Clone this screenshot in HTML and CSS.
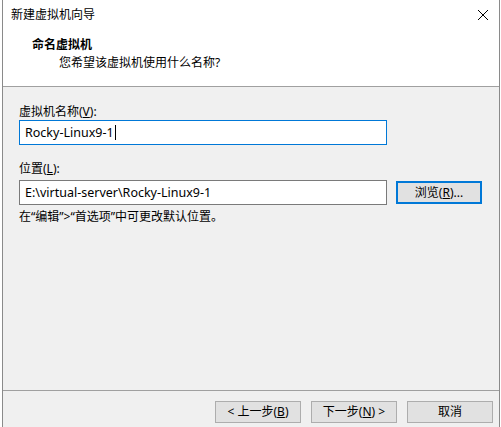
FILE: index.html
```html
<!DOCTYPE html>
<html lang="zh-CN">
<head>
<meta charset="utf-8">
<link rel="stylesheet" href="styles.css">
</head>
<body>
<div class="dialog">
  <div class="header">
    <div class="titlebar">
      <span class="title">新建虚拟机向导</span>
      <svg class="close" width="12" height="12" viewBox="0 0 12 12"><path d="M1 1L11 11M11 1L1 11" stroke="#000" stroke-width="1"/></svg>
    </div>
    <div class="heading">命名虚拟机</div>
    <div class="subheading">您希望该虚拟机使用什么名称?</div>
  </div>
  <div class="body">
    <div class="label">虚拟机名称(<u>V</u>):</div>
    <div class="row">
      <div class="input focused">Rocky-Linux9-1<span class="caret"></span></div>
    </div>
    <div class="label second">位置(<u>L</u>):</div>
    <div class="row">
      <div class="input">E:\virtual-server\Rocky-Linux9-1</div>
      <button class="btn browse">浏览(<u>R</u>)...</button>
    </div>
    <div class="hint">在“编辑”&gt;“首选项”中可更改默认位置。</div>
  </div>
  <div class="footer">
    <button class="btn">&lt; 上一步(<u>B</u>)</button>
    <button class="btn">下一步(<u>N</u>) &gt;</button>
    <button class="btn">取消</button>
  </div>
</div>
</body>
</html>
```

FILE: styles.css
```css
* { box-sizing: border-box; }
html, body {
  margin: 0;
  padding: 0;
  background: #ffffff;
  font-family: "Noto Sans", "Noto Sans CJK SC", sans-serif;
  font-size: 12px;
  color: #000;
}
.dialog {
  margin-left: 2px;
  width: 498px;
  height: 427px;
  border-left: 1px solid #8a8a8a;
  border-right: 1px solid #8a8a8a;
  display: flex;
  flex-direction: column;
  background: #f0f0f0;
}
.header {
  background: #ffffff;
  height: 87px;
  border-bottom: 1px solid #a0a0a0;
  padding-top: 7px;
}
.titlebar {
  display: flex;
  justify-content: space-between;
  align-items: center;
  height: 16px;
  padding-left: 8px;
  padding-right: 10px;
  line-height: 16px;
}
.heading {
  font-weight: bold;
  margin-top: 14px;
  padding-left: 29px;
  line-height: 16px;
}
.subheading {
  margin-top: 2px;
  padding-left: 56px;
  line-height: 16px;
}
.body {
  flex: 1;
  padding: 17px 0 0 16px;
}
.label { line-height: 16px; height: 16px; }
.label.second { margin-top: 16px; }
.label u, .btn u { text-decoration: underline; }
.row {
  display: flex;
  align-items: center;
  margin-top: 0;
}
.label.second + .row { margin-top: 3px; }
.input {
  width: 368px;
  height: 25px;
  background: #fff;
  border: 1px solid #7a7a7a;
  padding-left: 5px;
  line-height: 23px;
  white-space: nowrap;
  font-size: 12.5px;
}
.input.focused { border-color: #0078d7; }
.caret {
  display: inline-block;
  width: 1px;
  height: 15px;
  background: #000;
  vertical-align: -3px;
  margin-left: 1px;
}
.btn {
  width: 86px;
  height: 22px;
  background: #e1e1e1;
  border: 1px solid #adadad;
  font-family: "Noto Sans", "Noto Sans CJK SC", sans-serif;
  font-size: 12px;
  color: #000;
  padding: 0;
  line-height: 18px;
}
.browse {
  margin-left: 9px;
  height: 23px;
  border: 2px solid #0078d7;
}
.hint {
  margin-top: 4px;
  line-height: 16px;
}
.footer {
  border-top: 1px solid #a0a0a0;
  height: 37px;
  display: flex;
  justify-content: flex-end;
  padding-top: 10px;
  padding-right: 6px;
  gap: 10px;
}
```
